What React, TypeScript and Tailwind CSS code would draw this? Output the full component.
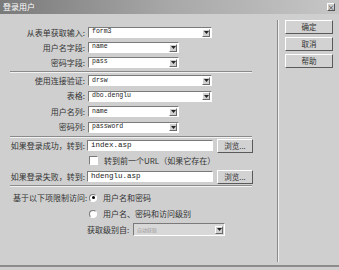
import React from "react";

const FONT = { fontFamily: '"Noto Sans CJK SC", "Noto Sans", sans-serif' };
const VAL = { fontFamily: '"Liberation Mono", "DejaVu Sans Mono", monospace' };

function Arrow() {
  return (
    <div className="flex h-[8px] w-[8px] shrink-0 items-center justify-center border border-t-white border-l-white border-b-[#6a6a6a] border-r-[#6a6a6a] bg-[#d0d0d0]">
      <svg width="5" height="3" viewBox="0 0 5 3">
        <path d="M0 0h5L2.5 3z" fill="#222" />
      </svg>
    </div>
  );
}

function Select({ value, w, disabled }: { value: string; w: string; disabled?: boolean }) {
  return (
    <div
      className={`flex h-[11px] items-center border border-t-[#7a7a7a] border-l-[#7a7a7a] border-b-white border-r-white pr-[1px] ${w} ${
        disabled ? "bg-[#d6d6d6]" : "bg-white"
      }`}
    >
      <span className="flex-1 pl-[3px] text-[6.5px] leading-none text-[#222]" style={VAL}>
        {value}
      </span>
      <Arrow />
    </div>
  );
}

function Label({ children }: { children: React.ReactNode }) {
  return (
    <div className="w-[86px] shrink-0 whitespace-nowrap pr-[1px] text-right text-[8px] leading-none text-[#333]">
      {children}
    </div>
  );
}

function Row({ h, label, children }: { h: string; label: string; children: React.ReactNode }) {
  return (
    <div className={`flex items-center ${h}`}>
      <Label>{label}</Label>
      <div className="ml-[2px] flex items-center">{children}</div>
    </div>
  );
}

function Sep() {
  return (
    <div className="flex h-[3px] items-center pl-[10px]">
      <div className="h-[2px] w-[242px] border-t border-t-[#8a8a8a] border-b border-b-[#f2f2f2]" />
    </div>
  );
}

function Btn({ children, w }: { children: React.ReactNode; w: string }) {
  return (
    <div
      className={`flex h-[14px] items-center justify-center border border-t-white border-l-white border-b-[#5a5a5a] border-r-[#5a5a5a] bg-[#d2d2d2] text-[7.5px] leading-none text-[#333] ${w}`}
    >
      {children}
    </div>
  );
}

function UrlInput({ value }: { value: string }) {
  return (
    <div className="flex h-[11px] w-[126px] items-center border border-t-[#7a7a7a] border-l-[#7a7a7a] border-b-white border-r-white bg-white pl-[3px]">
      <span className="text-[7.5px] leading-none text-[#222]" style={VAL}>
        {value}
      </span>
    </div>
  );
}

export default function App() {
  return (
    <div className="h-[270px] w-[339px] overflow-hidden bg-[#cfcfcf]" style={FONT}>
      {/* title bar */}
      <div className="flex h-[14px] items-center justify-between bg-gradient-to-r from-[#7a7a7a] via-[#a8a8a8] to-[#c6c6c6] pl-[3px] pr-[4px]">
        <span className="text-[8px] leading-none text-white">登录用户</span>
        <div className="flex h-[8px] w-[8px] items-center justify-center border border-t-white border-l-white border-b-[#555] border-r-[#555] bg-[#cfcfcf] text-[7px] leading-none text-[#222]">
          ×
        </div>
      </div>

      <div className="flex h-[253px] border-b-2 border-b-[#8c8c8c]">
        {/* left panel */}
        <div className="flex w-[277px] flex-col pt-[11px]">
          <Row h="h-[15px]" label="从表单获取输入:">
            <Select value="form3" w="w-[124px]" />
          </Row>
          <Row h="h-[15px]" label="用户名字段:">
            <Select value="name" w="w-[91px]" />
          </Row>
          <Row h="h-[15px]" label="密码字段:">
            <Select value="pass" w="w-[91px]" />
          </Row>
          <Sep />
          <Row h="h-[15.5px]" label="使用连接验证:">
            <Select value="drsw" w="w-[124px]" />
          </Row>
          <Row h="h-[15.5px]" label="表格:">
            <Select value="dbo.denglu" w="w-[124px]" />
          </Row>
          <Row h="h-[15.5px]" label="用户名列:">
            <Select value="name" w="w-[91px]" />
          </Row>
          <Row h="h-[15.5px]" label="密码列:">
            <Select value="password" w="w-[91px]" />
          </Row>
          <Sep />
          <div className="flex h-[15px] items-center">
            <Label>如果登录成功，转到:</Label>
            <div className="ml-[1px]">
              <UrlInput value="index.asp" />
            </div>
            <div className="ml-[4px]">
              <Btn w="w-[36px]">浏览...</Btn>
            </div>
          </div>
          <div className="flex h-[15.5px] items-center pl-[89px]">
            <div className="h-[9px] w-[9px] border border-t-[#7a7a7a] border-l-[#7a7a7a] border-b-white border-r-white bg-white" />
            <span className="ml-[6px] text-[8px] leading-none text-[#333]">转到前一个URL（如果它存在）</span>
          </div>
          <div className="flex h-[16px] items-center">
            <Label>如果登录失败，转到:</Label>
            <div className="ml-[1px]">
              <UrlInput value="hdenglu.asp" />
            </div>
            <div className="ml-[4px]">
              <Btn w="w-[36px]">浏览...</Btn>
            </div>
          </div>
          <Sep />
          <div className="flex h-[18px] items-center pt-[2px]">
            <div className="w-[86px] shrink-0 whitespace-nowrap pl-[13px] text-[8px] leading-none text-[#333]">
              基于以下项限制访问:
            </div>
            <div className="ml-[3px] flex h-[8px] w-[8px] items-center justify-center rounded-full border border-t-[#7a7a7a] border-l-[#7a7a7a] border-b-white border-r-white bg-white">
              <div className="h-[3px] w-[3px] rounded-full bg-black" />
            </div>
            <span className="ml-[6px] text-[8px] leading-none text-[#333]">用户名和密码</span>
          </div>
          <div className="flex h-[16px] items-center pl-[89px]">
            <div className="h-[8px] w-[8px] rounded-full border border-t-[#7a7a7a] border-l-[#7a7a7a] border-b-white border-r-white bg-white" />
            <span className="ml-[6px] text-[8px] leading-none text-[#333]">用户名、密码和访问级别</span>
          </div>
          <div className="flex h-[16px] items-center pl-[87px]">
            <span className="w-[44px] whitespace-nowrap text-[8px] leading-none text-[#333]">获取级别自:</span>
            <div className="ml-[2px] flex h-[13px] w-[92px] items-center border border-t-[#7a7a7a] border-l-[#7a7a7a] border-b-white border-r-white bg-[#d8d8d8] pr-[1px]">
              <span className="flex-1 pl-[3px] text-[5px] leading-none text-[#999]">自动获取</span>
              <Arrow />
            </div>
          </div>
        </div>

        {/* vertical separator */}
        <div className="mt-[6px] mb-[3px] w-[2px] border-l border-l-[#8a8a8a] border-r border-r-[#f2f2f2]" />

        {/* right buttons */}
        <div className="flex flex-col gap-[3px] pl-[6px] pt-[6px]">
          <Btn w="w-[48px]">确定</Btn>
          <Btn w="w-[48px]">取消</Btn>
          <Btn w="w-[48px]">帮助</Btn>
        </div>
      </div>
    </div>
  );
}
